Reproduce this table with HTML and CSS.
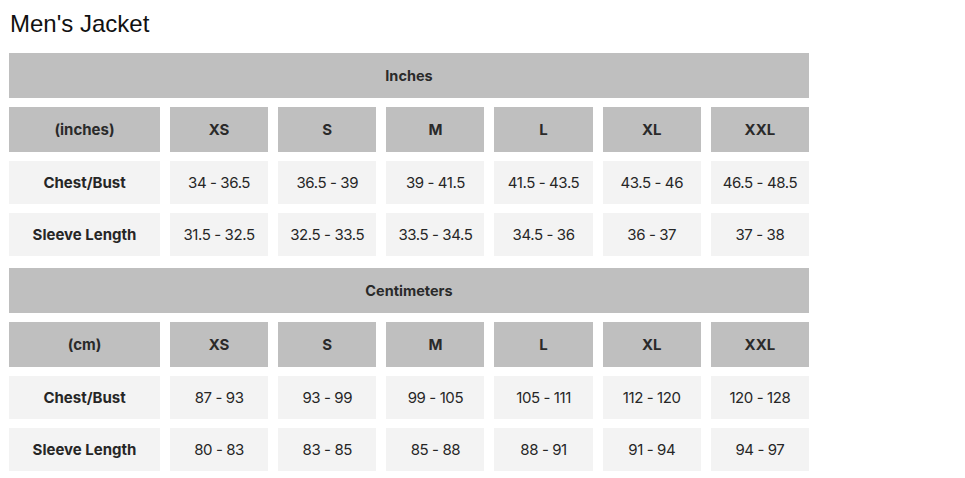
FILE: index.html
```html
<!DOCTYPE html>
<html>
<head>
<meta charset="utf-8">
<link rel="stylesheet" href="styles.css">
</head>
<body>
<h1 class="title">Men's Jacket</h1>
<div class="chart">
  <div class="cell unit">Inches</div>
  <div class="cell head">(inches)</div>
  <div class="cell head">XS</div>
  <div class="cell head">S</div>
  <div class="cell head">M</div>
  <div class="cell head">L</div>
  <div class="cell head">XL</div>
  <div class="cell head">XXL</div>
  <div class="cell label">Chest/Bust</div>
  <div class="cell">34 - 36.5</div>
  <div class="cell">36.5 - 39</div>
  <div class="cell">39 - 41.5</div>
  <div class="cell">41.5 - 43.5</div>
  <div class="cell">43.5 - 46</div>
  <div class="cell">46.5 - 48.5</div>
  <div class="cell label">Sleeve Length</div>
  <div class="cell">31.5 - 32.5</div>
  <div class="cell">32.5 - 33.5</div>
  <div class="cell">33.5 - 34.5</div>
  <div class="cell">34.5 - 36</div>
  <div class="cell">36 - 37</div>
  <div class="cell">37 - 38</div>
</div>
<div class="chart second">
  <div class="cell unit">Centimeters</div>
  <div class="cell head">(cm)</div>
  <div class="cell head">XS</div>
  <div class="cell head">S</div>
  <div class="cell head">M</div>
  <div class="cell head">L</div>
  <div class="cell head">XL</div>
  <div class="cell head">XXL</div>
  <div class="cell label">Chest/Bust</div>
  <div class="cell">87 - 93</div>
  <div class="cell">93 - 99</div>
  <div class="cell">99 - 105</div>
  <div class="cell">105 - 111</div>
  <div class="cell">112 - 120</div>
  <div class="cell">120 - 128</div>
  <div class="cell label">Sleeve Length</div>
  <div class="cell">80 - 83</div>
  <div class="cell">83 - 85</div>
  <div class="cell">85 - 88</div>
  <div class="cell">88 - 91</div>
  <div class="cell">91 - 94</div>
  <div class="cell">94 - 97</div>
</div>
</body>
</html>
```
FILE: styles.css
```css
html, body {
  margin: 0;
  padding: 0;
  background: #ffffff;
}
body {
  padding: 0 0 0 9px;
  font-family: Inter, "Liberation Sans", sans-serif;
  color: #222222;
}
.title {
  margin: 0;
  padding: 10px 0 0 1px;
  height: 45px;
  box-sizing: border-box;
  font-family: "Liberation Sans", Arial, sans-serif;
  font-weight: 400;
  font-size: 24px;
  line-height: 28px;
  color: #111111;
}
.chart {
  width: 800px;
  display: grid;
  grid-template-columns: 151px repeat(6, 1fr);
  grid-template-rows: 45px 45px 43px 43px;
  column-gap: 10px;
  row-gap: 9px;
  margin-top: 8px;
}
.chart.second {
  margin-top: 12px;
}
.cell {
  background: #f3f3f3;
  display: flex;
  align-items: center;
  justify-content: center;
  font-size: 15px;
  letter-spacing: -0.4px;
  color: #262626;
}
.unit {
  grid-column: 1 / -1;
  background: #bfbfbf;
  font-weight: 700;
  font-size: 14.5px;
  letter-spacing: 0;
  color: #2a2a2a;
}
.head {
  background: #bfbfbf;
  font-weight: 700;
  letter-spacing: 0;
  color: #2a2a2a;
}
.label {
  font-weight: 700;
  letter-spacing: 0;
}
```
